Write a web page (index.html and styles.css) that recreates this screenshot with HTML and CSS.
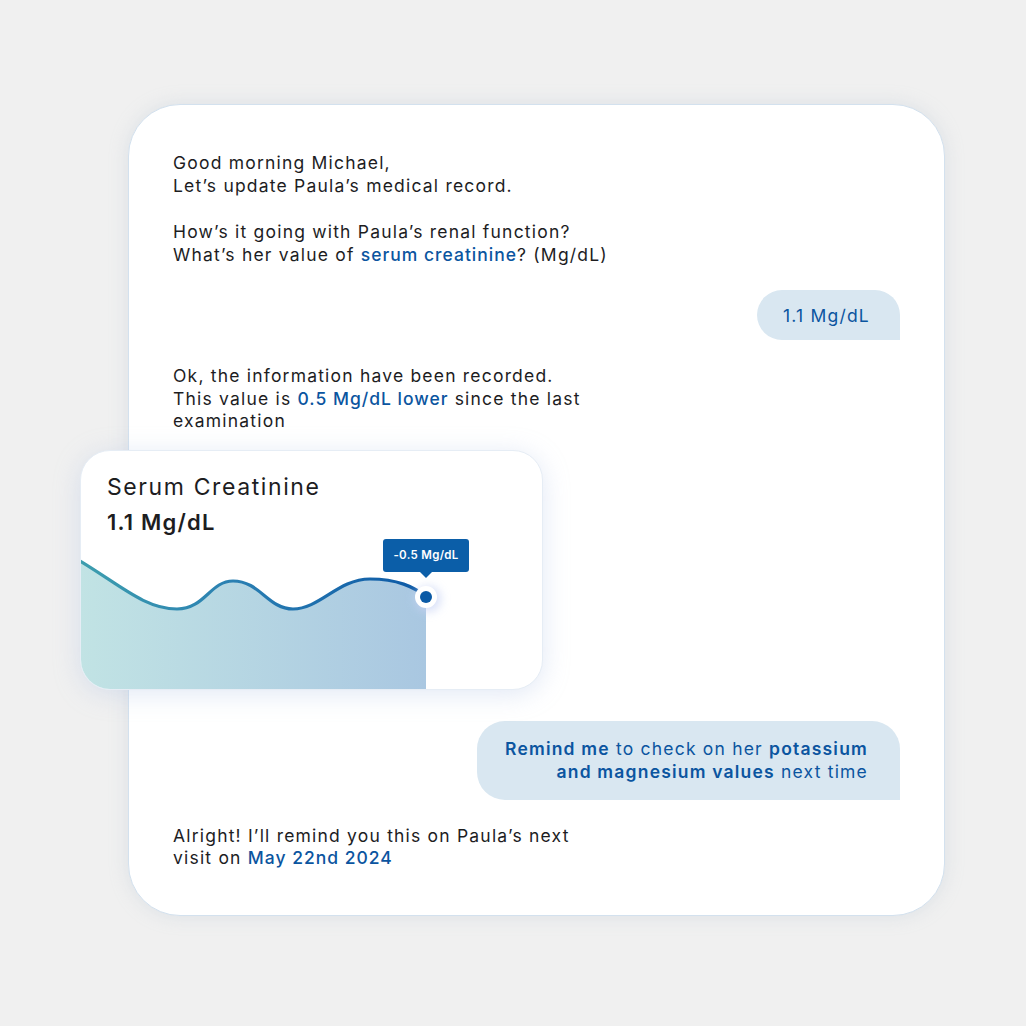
FILE: index.html
```html
<!DOCTYPE html>
<html>
<head>
<meta charset="utf-8">
<link rel="stylesheet" href="styles.css">
</head>
<body>
<div class="page">
  <div class="chat">
    <p class="msg">Good morning Michael,<br>Let’s update Paula’s medical record.</p>
    <p class="msg gap">How’s it going with Paula’s renal function?<br>What’s her value of <span class="hl">serum creatinine</span>? (Mg/dL)</p>
    <div class="bubble small">1.1 Mg/dL</div>
    <p class="msg m3">Ok, the information have been recorded.<br>This value is <span class="hl">0.5 Mg/dL lower</span> since the last<br>examination</p>
    <div class="chart-card">
      <div class="chart-title">Serum Creatinine</div>
      <div class="chart-value">1.1 Mg/dL</div>
      <svg class="chart" width="463" height="154" viewBox="0 0 463 154">
        <defs>
          <linearGradient id="fillg" x1="0" y1="0" x2="1" y2="0">
            <stop offset="0" stop-color="#c1e3e4"/>
            <stop offset="1" stop-color="#a9c7e1"/>
          </linearGradient>
          <linearGradient id="lineg" x1="0" y1="0" x2="346" y2="0" gradientUnits="userSpaceOnUse">
            <stop offset="0" stop-color="#3d9eae"/>
            <stop offset="0.45" stop-color="#2a7fb2"/>
            <stop offset="1" stop-color="#0c58a6"/>
          </linearGradient>
          <filter id="sh" x="-100%" y="-100%" width="300%" height="300%">
            <feGaussianBlur stdDeviation="5"/>
          </filter>
        </defs>
        <path d="M0,26 C40,50 65,74 97,74 C125,74 130,46 153,46 C180,46 188,74 213,74 C240,74 258,44 290,44 C318,44 333,52 346,61 L346,154 L0,154 Z" fill="url(#fillg)"/>
        <path d="M0,26 C40,50 65,74 97,74 C125,74 130,46 153,46 C180,46 188,74 213,74 C240,74 258,44 290,44 C318,44 333,52 346,61" fill="none" stroke="url(#lineg)" stroke-width="3.2" stroke-linecap="round"/>
        <circle cx="348" cy="64" r="13" fill="#c9d4f5" opacity="0.7" filter="url(#sh)"/>
        <circle cx="346" cy="62" r="11" fill="#ffffff"/>
        <circle cx="346" cy="62" r="6" fill="#0b5aa6"/>
      </svg>
      <div class="tip">-0.5 Mg/dL</div>
    </div>
    <div class="bubble big"><span class="b">Remind me</span> to check on her <span class="b">potassium</span><br><span class="b">and magnesium values</span> next time</div>
    <p class="msg m5">Alright! I’ll remind you this on Paula’s next<br>visit on <span class="hl">May 22nd 2024</span></p>
  </div>
</div>
</body>
</html>
```

FILE: styles.css
```css
html, body {
  margin: 0;
  padding: 0;
  background: #f0f0f0;
}
body {
  width: 1026px;
  height: 1026px;
  overflow: hidden;
  font-family: Inter, "Liberation Sans", Arial, sans-serif;
  color: #1d1d1f;
}
.page {
  padding-top: 104px;
  padding-left: 128px;
}
.chat {
  width: 817px;
  height: 812px;
  box-sizing: border-box;
  background: #ffffff;
  border: 1px solid #d3e1ee;
  border-radius: 52px;
  box-shadow: 0 0 18px rgba(180, 195, 210, 0.35);
  padding: 47px 44px 0 44px;
  display: flex;
  flex-direction: column;
}
.msg {
  margin: 0;
  font-size: 17.5px;
  line-height: 22.5px;
  letter-spacing: 1.2px;
}
.msg.gap { margin-top: 24px; }
.msg.m3 { margin-top: 25px; }
.msg.m5 { margin-top: 25px; }
.hl {
  color: #0b55a0;
  font-weight: 500;
  letter-spacing: 1px;
}
.bubble {
  align-self: flex-end;
  background: #d9e7f1;
  color: #0b55a0;
  border-radius: 25px 25px 0 25px;
  font-size: 17.5px;
  letter-spacing: 1.2px;
  box-sizing: border-box;
}
.bubble.small {
  margin-top: 24px;
  height: 50px;
  width: 143px;
  display: flex;
  align-items: center;
  justify-content: center;
  padding-right: 4px;
}
.bubble.big {
  margin-top: 31px;
  width: 423px;
  height: 79px;
  border-radius: 28px 28px 0 28px;
  padding: 16px 32px 0 0;
  text-align: right;
  line-height: 23px;
}
.b { font-weight: 600; }
.chart-card {
  position: relative;
  margin-top: 17px;
  margin-left: -93px;
  width: 463px;
  height: 240px;
  box-sizing: border-box;
  background: #ffffff;
  border: 1px solid #e6edf5;
  border-radius: 30px;
  box-shadow: 0 4px 26px rgba(170, 190, 225, 0.35);
  overflow: hidden;
  display: flex;
  flex-direction: column;
  padding-top: 22px;
}
.chart-title {
  padding-left: 26px;
  font-size: 23px;
  line-height: 28px;
  letter-spacing: 1.6px;
  color: #1d1d1f;
}
.chart-value {
  margin-top: 7px;
  padding-left: 26px;
  font-size: 22px;
  line-height: 28px;
  font-weight: 600;
  color: #1d1d1f;
  letter-spacing: 1.2px;
}
.chart {
  display: block;
  margin-left: -1px;
  margin-top: -1px;
}
.tip {
  position: absolute;
  left: 302px;
  top: 88px;
  width: 86px;
  height: 33px;
  box-sizing: border-box;
  background: #0b5ea8;
  color: #ffffff;
  border-radius: 3px;
  font-size: 11.5px;
  font-weight: 600;
  display: flex;
  align-items: center;
  justify-content: center;
  letter-spacing: 0.3px;
}
.tip::after {
  content: "";
  position: absolute;
  left: 37px;
  bottom: -6px;
  border-left: 6px solid transparent;
  border-right: 6px solid transparent;
  border-top: 6px solid #0b5ea8;
}
```
